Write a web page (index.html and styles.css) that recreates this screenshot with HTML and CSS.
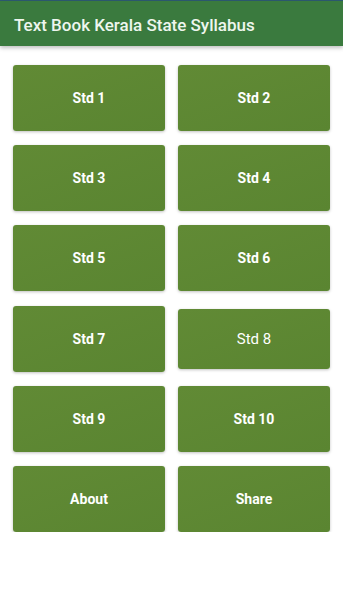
FILE: index.html
```html
<!DOCTYPE html>
<html>
<head>
<meta charset="utf-8">
<link rel="stylesheet" href="styles.css">
</head>
<body>
<div class="statusline"></div>
<header class="appbar">Text Book Kerala State Syllabus</header>
<main class="grid">
  <button class="btn">Std 1</button>
  <button class="btn">Std 2</button>
  <button class="btn">Std 3</button>
  <button class="btn">Std 4</button>
  <button class="btn">Std 5</button>
  <button class="btn">Std 6</button>
  <button class="btn">Std 7</button>
  <button class="btn btn-plain">Std 8</button>
  <button class="btn">Std 9</button>
  <button class="btn">Std 10</button>
  <button class="btn">About</button>
  <button class="btn">Share</button>
</main>
</body>
</html>
```
FILE: styles.css
```css
html, body {
  margin: 0;
  padding: 0;
  background: #ffffff;
  font-family: Roboto, "Liberation Sans", sans-serif;
}
.statusline {
  height: 1px;
  background: #2d5a72;
}
.appbar {
  height: 45px;
  box-sizing: border-box;
  padding-top: 2px;
  background: #3a7a3e;
  color: #eef6ee;
  font-size: 17px;
  font-weight: 500;
  display: flex;
  align-items: center;
  padding-left: 14px;
  box-shadow: 0 2px 4px rgba(0,0,0,0.25);
  position: relative;
}
.grid {
  display: grid;
  grid-template-columns: 1fr 1fr;
  column-gap: 13px;
  row-gap: 14.2px;
  padding: 19px 13px 0 13px;
}
.btn {
  height: 66px;
  border: none;
  border-radius: 3px;
  background: linear-gradient(160deg, #618a35 0%, #5a8531 100%);
  color: #ffffff;
  font-family: Roboto, "Liberation Sans", sans-serif;
  font-size: 14px;
  font-weight: 700;
  box-shadow: 0 1px 3px rgba(0,0,0,0.25);
  padding: 0;
}
.btn-plain {
  font-weight: 400;
  height: 60px;
  margin-top: 3px;
  font-size: 15px;
}
```
